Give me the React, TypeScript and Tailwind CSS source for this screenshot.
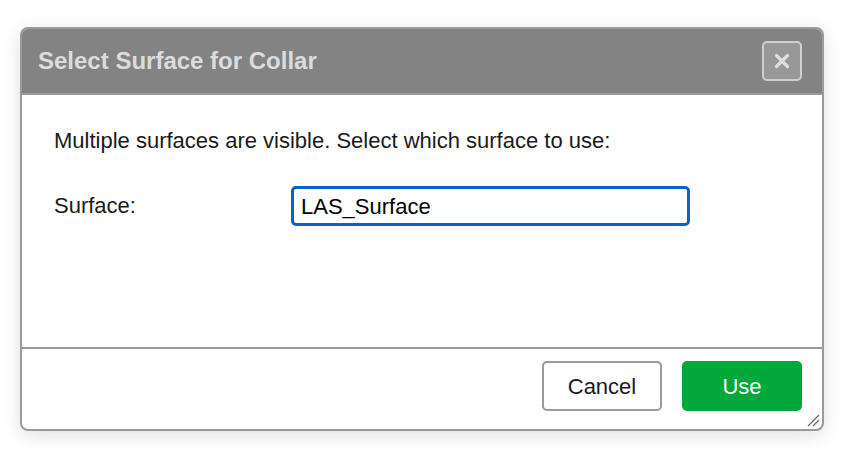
import React from "react";

export default function App() {
  return (
    <div className="w-[842px] h-[454px] bg-white overflow-hidden" style={{ fontFamily: '"Liberation Sans", Arial, Helvetica, sans-serif' }}>
      <div className="ml-[20px] mt-[27px] w-[804px] h-[404px] border-2 border-[#9a9a9a] rounded-[8px] bg-white shadow-[0_4px_18px_rgba(0,0,0,0.13)] flex flex-col overflow-hidden relative">
        <div className="h-[66px] shrink-0 bg-[#838383] border-b-2 border-[#9a9a9a] flex items-center justify-between pl-[16px] pr-[20px]">
          <div className="text-[24px] font-bold text-[#dcdcdc] leading-none">Select Surface for Collar</div>
          <div className="w-[40px] h-[40px] rounded-[5px] border-2 border-[#cfcfcf] bg-[#989898] flex items-center justify-center">
            <svg width="16" height="16" viewBox="0 0 16 16">
              <path d="M2.5 2.5 L13.5 13.5 M13.5 2.5 L2.5 13.5" stroke="#dedede" strokeWidth="3.2" strokeLinecap="round" />
            </svg>
          </div>
        </div>
        <div className="flex-1 pl-[32px] pt-[33px]">
          <div className="text-[22px] leading-[26px] text-[#1a1a1a]">Multiple surfaces are visible. Select which surface to use:</div>
          <div className="flex items-center mt-[32px]">
            <div className="w-[237px] text-[22px] leading-[26px] text-[#1a1a1a]">Surface:</div>
            <div className="w-[399px] h-[40px] border-[3px] border-[#0a63c9] rounded-[5px] flex items-center pl-[7px] text-[22px] text-black">LAS_Surface</div>
          </div>
        </div>
        <div className="h-[82px] shrink-0 border-t-2 border-[#9a9a9a] flex items-start justify-end gap-[20px] pt-[12px] pr-[20px]">
          <div className="w-[120px] h-[50px] border-2 border-[#9a9a9a] rounded-[5px] flex items-center justify-center text-[22px] text-[#1a1a1a]">Cancel</div>
          <div className="w-[120px] h-[50px] bg-[#02a83a] rounded-[5px] flex items-center justify-center text-[22px] text-white">Use</div>
        </div>
        <svg className="absolute right-[2px] bottom-[2px]" width="14" height="14" viewBox="0 0 14 14">
          <path d="M2 13 L13 2 M7 13 L13 7" stroke="#6a6a6a" strokeWidth="1.3" />
        </svg>
      </div>
    </div>
  );
}
